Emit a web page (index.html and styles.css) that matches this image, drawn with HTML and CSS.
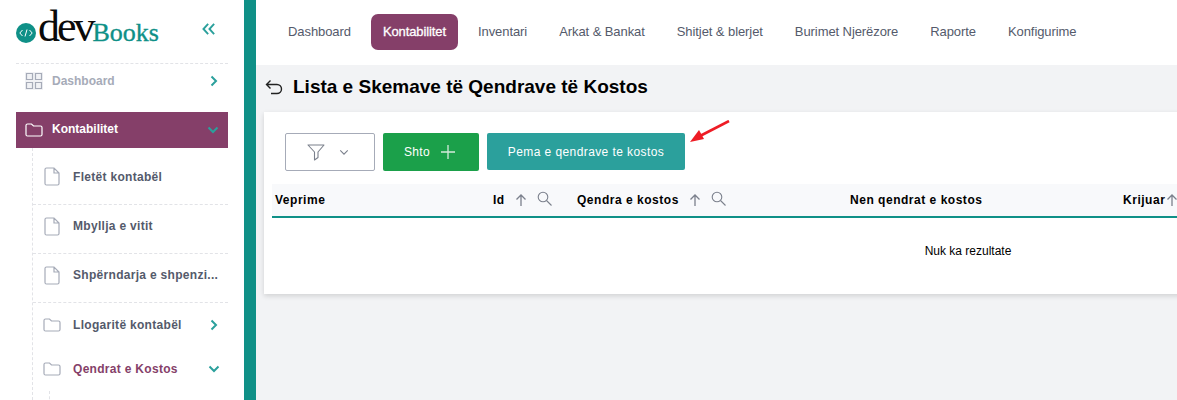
FILE: index.html
```html
<!DOCTYPE html>
<html lang="sq">
<head>
<meta charset="utf-8">
<title>Lista e Skemave të Qendrave të Kostos</title>
<link rel="stylesheet" href="styles.css">
</head>
<body>
<div class="app">
  <aside class="sidebar">
    <div class="brand">
      <div class="logo">
        <svg class="logo-mark" viewBox="0 0 20 20" width="20" height="20"><circle cx="10" cy="10" r="10" fill="#0f9087"/><path d="M6.500 7 3.800 10l2.700 3M13.500 7l2.700 3-2.700 3M11 6.500 9 13.500" fill="none" stroke="#fff" stroke-width="1"/></svg>
        <span class="logo-dev">dev</span><span class="logo-books">Books</span>
      </div>
      <svg class="collapse" viewBox="0 0 16 14" width="14" height="12"><path d="M7 1 1.500 7 7 13M14 1 8.500 7 14 13" fill="none" stroke="#2ba09c" stroke-width="2.200"/></svg>
    </div>
    <div class="side-item side-top">
      <svg class="ico-grid" viewBox="0 0 18 18" width="18" height="18"><rect width="18" height="18" fill="#f1f2f5"/><path d="M1.500 1.500h6v6h-6zM10.500 1.500h6v6h-6zM1.500 10.500h6v6h-6zM10.500 10.500h6v6h-6z" fill="none" stroke="#a6abb8" stroke-width="1.200"/></svg>
      <span class="side-label">Dashboard</span>
      <svg class="chev" viewBox="0 0 10 12" width="10" height="12"><path d="M2.500 1.500 7 6l-4.500 4.500" fill="none" stroke="#2ba09c" stroke-width="2"/></svg>
    </div>
    <div class="side-item side-active">
      <svg class="ico-folder" viewBox="0 0 18 14" width="18" height="14"><path d="M1 2.500Q1 1 2.500 1h4L8.500 3h7Q17 3 17 4.500v7q0 1.500-1.500 1.500h-13Q1 13 1 11.500z" fill="none" stroke="#fff" stroke-width="1.200"/></svg>
      <span class="side-label">Kontabilitet</span>
      <svg class="chev-d" viewBox="0 0 12 10" width="12" height="10"><path d="M1.500 2.500 6 7l4.500-4.500" fill="none" stroke="#2ba09c" stroke-width="2"/></svg>
    </div>
    <div class="sub">
      <div class="sub-item sub-sep">
        <svg class="ico-file" viewBox="0 0 16 19" width="16" height="19"><path d="M1 2.500Q1 1 2.500 1H10l5 5v10.500q0 1.500-1.500 1.500h-11Q1 18 1 16.500zM10 1v5h5" fill="none" stroke="#a6abb8" stroke-width="1.200"/></svg>
        <span class="sub-label">Fletët kontabël</span>
      </div>
      <div class="sub-item sub-sep">
        <svg class="ico-file" viewBox="0 0 16 19" width="16" height="19"><path d="M1 2.500Q1 1 2.500 1H10l5 5v10.500q0 1.500-1.500 1.500h-11Q1 18 1 16.500zM10 1v5h5" fill="none" stroke="#a6abb8" stroke-width="1.200"/></svg>
        <span class="sub-label">Mbyllja e vitit</span>
      </div>
      <div class="sub-item sub-sep">
        <svg class="ico-file" viewBox="0 0 16 19" width="16" height="19"><path d="M1 2.500Q1 1 2.500 1H10l5 5v10.500q0 1.500-1.500 1.500h-11Q1 18 1 16.500zM10 1v5h5" fill="none" stroke="#a6abb8" stroke-width="1.200"/></svg>
        <span class="sub-label">Shpërndarja e shpenzi...</span>
      </div>
      <div class="sub-item sub-folder">
        <svg class="ico-folder" viewBox="0 0 18 14" width="18" height="14"><path d="M1 2.500Q1 1 2.500 1h4L8.500 3h7Q17 3 17 4.500v7q0 1.500-1.500 1.500h-13Q1 13 1 11.500z" fill="none" stroke="#a6abb8" stroke-width="1.200"/></svg>
        <span class="sub-label">Llogaritë kontabël</span>
        <svg class="chev" viewBox="0 0 10 12" width="10" height="12"><path d="M2.500 1.500 7 6l-4.500 4.500" fill="none" stroke="#2ba09c" stroke-width="2"/></svg>
      </div>
      <div class="sub-item sub-folder sub-open">
        <svg class="ico-folder" viewBox="0 0 18 14" width="18" height="14"><path d="M1 2.500Q1 1 2.500 1h4L8.500 3h7Q17 3 17 4.500v7q0 1.500-1.500 1.500h-13Q1 13 1 11.500z" fill="none" stroke="#a6abb8" stroke-width="1.200"/></svg>
        <span class="sub-label">Qendrat e Kostos</span>
        <svg class="chev-d" viewBox="0 0 12 10" width="12" height="10"><path d="M1.500 2.500 6 7l4.500-4.500" fill="none" stroke="#2ba09c" stroke-width="2"/></svg>
      </div>
      <div class="sub-nested"></div>
    </div>
  </aside>
  <div class="strip"></div>
  <main class="main">
    <nav class="topnav">
      <a class="nav-link">Dashboard</a>
      <a class="nav-link nav-active">Kontabilitet</a>
      <a class="nav-link">Inventari</a>
      <a class="nav-link">Arkat &amp; Bankat</a>
      <a class="nav-link">Shitjet &amp; blerjet</a>
      <a class="nav-link">Burimet Njerëzore</a>
      <a class="nav-link">Raporte</a>
      <a class="nav-link">Konfigurime</a>
    </nav>
    <div class="content">
      <div class="title-row">
        <svg class="back" viewBox="0 0 18 16" width="18" height="16"><path d="M5.500 1.500 1.500 5.500l4 4M1.500 5.500H12a4.500 4.500 0 0 1 0 9H6" fill="none" stroke="#222" stroke-width="1.400"/></svg>
        <h1 class="title">Lista e Skemave të Qendrave të Kostos</h1>
      </div>
      <section class="card">
        <div class="toolbar">
          <button class="btn btn-filter">
            <svg viewBox="0 0 18 17" width="18" height="17"><path d="M1 1h16l-6 7v5.500L7.500 16V8z" fill="none" stroke="#7b808c" stroke-width="1.100" stroke-linejoin="round"/></svg>
            <svg viewBox="0 0 12 8" width="10" height="7"><path d="M1.500 1.500 6 6l4.500-4.500" fill="none" stroke="#7b808c" stroke-width="1.300"/></svg>
          </button>
          <button class="btn btn-add">Shto
            <svg viewBox="0 0 14 14" width="14" height="14"><path d="M7 0v14M0 7h14" fill="none" stroke="#d5eadb" stroke-width="1.300"/></svg>
          </button>
          <button class="btn btn-tree">Pema e qendrave te kostos</button>
          <svg class="arrow" viewBox="0 0 42 24" width="42" height="24"><path d="M40 1 11 16" stroke="#ee1c25" stroke-width="2.600" fill="none"/><path d="M1 22 15 19 10 10z" fill="#ee1c25"/></svg>
        </div>
        <div class="table-head">
          <div class="th th-actions">Veprime</div>
          <div class="th th-id">Id
            <svg class="up" viewBox="0 0 12 12" width="12" height="12"><path d="M6 12V1M1.500 5.500 6 1l4.500 4.500" fill="none" stroke="#7b808c" stroke-width="1.300"/></svg>
            <svg class="search" viewBox="0 0 15 15" width="15" height="15"><circle cx="6" cy="6" r="4.800" fill="none" stroke="#7b808c" stroke-width="1.100"/><path d="m9.500 9.500 5 5" stroke="#7b808c" stroke-width="1.100"/></svg>
          </div>
          <div class="th th-cost">Qendra e kostos
            <svg class="up" viewBox="0 0 12 12" width="12" height="12"><path d="M6 12V1M1.500 5.500 6 1l4.500 4.500" fill="none" stroke="#7b808c" stroke-width="1.300"/></svg>
            <svg class="search" viewBox="0 0 15 15" width="15" height="15"><circle cx="6" cy="6" r="4.800" fill="none" stroke="#7b808c" stroke-width="1.100"/><path d="m9.500 9.500 5 5" stroke="#7b808c" stroke-width="1.100"/></svg>
          </div>
          <div class="th th-sub">Nen qendrat e kostos</div>
          <div class="th th-created">Krijuar<svg class="up" viewBox="0 0 12 12" width="12" height="12"><path d="M6 12V1M1.500 5.500 6 1l4.500 4.500" fill="none" stroke="#7b808c" stroke-width="1.300"/></svg></div>
        </div>
        <div class="empty">Nuk ka rezultate</div>
      </section>
    </div>
  </main>
</div>
</body>
</html>
```
FILE: styles.css
```css
* { box-sizing: border-box; }
html, body { margin: 0; height: 100%; overflow: hidden; }
body { font-family: "Liberation Sans", Arial, sans-serif; background: #f2f3f5; }
.app { display: flex; width: 1177px; height: 400px; overflow: hidden; }

.sidebar { width: 244px; flex: none; background: #fff; padding: 0 16px; height: 400px; overflow: hidden; }
.strip { width: 12px; flex: none; background: #0f9087; }

.brand { height: 64px; border-bottom: 1px dashed #e2e3e7; display: flex; justify-content: space-between; padding-top: 7px; }
.logo { display: flex; align-items: baseline; height: 40px; font-family: "Liberation Serif", serif; }
.logo-mark { align-self: flex-start; margin-top: 16px; flex: none; }
.logo-dev { font-size: 44px; line-height: 40px; letter-spacing: -3px; color: #0a0a0a; margin-left: 2px; }
.logo-books { font-size: 26px; line-height: 28px; color: #0f9087; -webkit-text-stroke: .35px #0f9087; letter-spacing: 0; }
.collapse { margin: 16px 12px 0 0; }

.side-item { display: flex; align-items: center; font-size: 12px; font-weight: 700; }
.side-top { height: 34px; margin-bottom: 14px; padding: 0 9px; color: #a6abb8; }
.ico-grid { flex: none; margin-right: 9px; }
.side-label { flex: 1; }
.chev { flex: none; }
.side-active { height: 36px; background: #853f69; color: #fff; padding: 0 9px; }
.side-active .ico-folder { margin-right: 9px; }
.side-active .side-label { position: relative; top: -1px; }
.chev-d { flex: none; }

.sub { margin-left: 16px; border-left: 1px dashed #e2e3e7; position: relative; height: 252px; }
.sub-item { display: flex; align-items: center; padding-left: 11px; font-size: 12px; font-weight: 700; color: #545a6b; letter-spacing: .3px; }
.sub-sep { height: 49px; padding-bottom: 6px; border-bottom: 1px dashed #e2e3e7; }
.sub-item:first-child { height: 57px; padding-bottom: 1px; padding-top: 2px; }
.ico-file { flex: none; margin-right: 13px; }
.sub-folder { height: 44px; padding-right: 9px; padding-left: 10px; }
.sub-folder .ico-folder { margin-right: 12px; flex: none; }
.sub-label { flex: 1; white-space: nowrap; }
.sub-open .sub-label { color: #853f69; }
.sub-open .chev-d { margin-right: -1px; }
.sub-nested { margin-left: 16px; height: 40px; border-left: 1px dashed #e2e3e7; }

.main { flex: 1; min-width: 0; }
.topnav { height: 65px; background: #fff; display: flex; align-items: center; padding: 0 0 1px 20px; gap: 8px; }
.nav-link { display: block; padding: 0 12px; height: 36px; line-height: 35px; font-size: 13px; color: #545a6b; white-space: nowrap; letter-spacing: -.08px; border-radius: 7px; }
.nav-active { background: #853f69; color: #fff; -webkit-text-stroke: .3px #fff; letter-spacing: -.1px; }

.content { padding: 0 0 0 8px; }
.title-row { height: 47px; display: flex; align-items: center; gap: 10px; padding: 0 0 3px 1px; }
.title { margin: 0; font-size: 19px; font-weight: 700; color: #000; line-height: 44px; white-space: nowrap; }
.back { flex: none; }

.card { width: 1000px; height: 182px; background: #fff; box-shadow: 0 2px 5px rgba(0,0,0,.14); padding: 21px 0 0 8px; }
.toolbar { display: flex; gap: 8px; padding-left: 13px; height: 38px; margin-bottom: 13px; position: relative; }
.btn { font: 12px "Liberation Sans", Arial, sans-serif; height: 38px; border-radius: 2px; border: 0; color: #fff; padding: 0; display: flex; align-items: center; justify-content: center; }
.btn-filter { width: 90px; background: #fff; border: 1px solid #a6abb8; gap: 14px; padding-right: 4px; }
.btn-add { width: 96px; background: #1ba04a; gap: 11px; letter-spacing: .3px; padding-right: 3px; }
.btn-tree { width: 198px; height: 37px; background: #2ba09c; letter-spacing: .41px; }
.arrow { position: absolute; left: 417px; top: -13px; }

.table-head { height: 34px; width: 992px; background: #f8f9fb; border-bottom: 2px solid #0f9087; display: grid; grid-template-columns: 218px 84px 273px 273px 1fr; align-items: center; padding-left: 3px; }
.th { display: flex; align-items: center; font-size: 12px; font-weight: 700; color: #000; white-space: nowrap; letter-spacing: .52px; }
.th .up { margin-left: 10px; }
.th .search { margin-left: 10px; margin-top: -3px; }
.th-created .up { margin-left: 1px; }

.empty { width: 992px; font-size: 12px; color: #000; text-align: center; padding-top: 25px; line-height: 16px; padding-left: 400px; }
```
